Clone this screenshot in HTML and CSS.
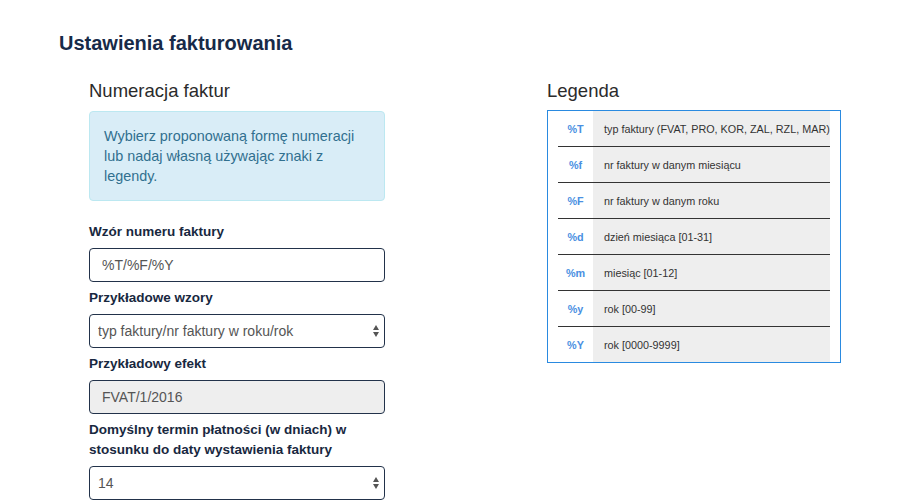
FILE: index.html
```html
<!DOCTYPE html>
<html lang="pl">

<head>
    <meta charset="UTF-8">
    <meta name="viewport" content="width=device-width, initial-scale=1.0">
    <title>Ustawienia fakturowania</title>
    <link rel="stylesheet" href="styles.css">
</head>

<body>
    <div class="page">
        <h1 class="page-title">Ustawienia fakturowania</h1>

        <div class="columns">
            <div class="col-form">
                <h2 class="section-title">Numeracja faktur</h2>

                <div class="alert-info">
                    Wybierz proponowaną formę numeracji lub nadaj własną używając znaki z legendy.
                </div>

                <form class="settings-form">
                    <label for="pattern">Wzór numeru faktury</label>
                    <input type="text" id="pattern" class="field" value="%T/%F/%Y">

                    <label for="examples">Przykładowe wzory</label>
                    <div class="select-wrap">
                        <select id="examples" class="field select">
                            <option>typ faktury/nr faktury w roku/rok</option>
                            <option>typ faktury/nr faktury w miesiącu/miesiąc/rok</option>
                        </select>
                    </div>

                    <label for="effect">Przykładowy efekt</label>
                    <input type="text" id="effect" class="field" value="FVAT/1/2016" disabled>

                    <label for="term">Domyślny termin płatności (w dniach) w stosunku do daty wystawienia faktury</label>
                    <div class="select-wrap">
                        <select id="term" class="field select">
                            <option>14</option>
                            <option>7</option>
                            <option>30</option>
                        </select>
                    </div>
                </form>
            </div>

            <div class="col-legend">
                <h2 class="section-title legend-title">Legenda</h2>
                <div class="legend-box">
                    <table class="legend">
                        <colgroup>
                            <col class="col-code">
                            <col>
                        </colgroup>
                        <tr><td class="code">%T</td><td class="desc">typ faktury (FVAT, PRO, KOR, ZAL, RZL, MAR)</td></tr>
                        <tr><td class="code">%f</td><td class="desc">nr faktury w danym miesiącu</td></tr>
                        <tr><td class="code">%F</td><td class="desc">nr faktury w danym roku</td></tr>
                        <tr><td class="code">%d</td><td class="desc">dzień miesiąca [01-31]</td></tr>
                        <tr><td class="code">%m</td><td class="desc">miesiąc [01-12]</td></tr>
                        <tr><td class="code">%y</td><td class="desc">rok [00-99]</td></tr>
                        <tr><td class="code">%Y</td><td class="desc">rok [0000-9999]</td></tr>
                    </table>
                </div>
            </div>
        </div>
    </div>
</body>

</html>
```

FILE: styles.css
```css
body {
    margin: 0;
    font-family: "Liberation Sans", Arial, sans-serif;
    background-color: #fff;
    color: #333;
}

.page {
    padding: 32px 0 0 59px;
}

.page-title {
    margin: 0;
    font-size: 20px;
    line-height: 22px;
    font-weight: bold;
    color: #172a48;
}

.columns {
    display: flex;
    gap: 162px;
    padding-left: 30px;
    margin-top: 27px;
}

.col-form {
    width: 296px;
}

.col-legend {
    width: 294px;
}

.section-title {
    margin: 0 0 10px;
    font-size: 18.5px;
    line-height: 20px;
    font-weight: normal;
    color: #2b2b2b;
}

.legend-title {
    margin-bottom: 9px;
}

.alert-info {
    background-color: #d9edf7;
    border: 1px solid #bce8f1;
    border-radius: 4px;
    padding: 14px;
    color: #31708f;
    font-size: 14.4px;
    line-height: 20px;
    margin-bottom: 21px;
}

.settings-form label {
    display: block;
    font-size: 13.5px;
    line-height: 20px;
    font-weight: bold;
    color: #182840;
    margin-bottom: 6px;
}

.field {
    display: block;
    box-sizing: border-box;
    width: 100%;
    height: 34px;
    margin: 0 0 6px;
    padding: 0 12px;
    border: 1px solid #22324a;
    border-radius: 4px;
    background-color: #fff;
    font-family: "Liberation Sans", Arial, sans-serif;
    font-size: 14px;
    color: #555;
}

.field:disabled {
    background-color: #eee;
    color: #555;
}

.select-wrap {
    position: relative;
}

.select {
    appearance: none;
    -webkit-appearance: none;
    padding-left: 8px;
}

.select-wrap::before,
.select-wrap::after {
    content: "";
    position: absolute;
    right: 6px;
    width: 0;
    height: 0;
    border-left: 3px solid transparent;
    border-right: 3px solid transparent;
    pointer-events: none;
}

.select-wrap::before {
    top: 11px;
    border-bottom: 5px solid #555;
}

.select-wrap::after {
    top: 18px;
    border-top: 5px solid #555;
}

.legend-box {
    border: 1px solid #2a8ae0;
    padding: 0 10px;
}

.legend {
    width: 272px;
    table-layout: fixed;
    border-collapse: separate;
    border-spacing: 0;
    font-size: 10.8px;
}

.legend .col-code {
    width: 35px;
}

.legend td {
    height: 35px;
    padding: 0;
    border-bottom: 1px solid #333;
    vertical-align: middle;
}

.legend tr:last-child td {
    border-bottom: none;
}

.legend .code {
    text-align: center;
    font-weight: bold;
    color: #4a90e2;
}

.legend .desc {
    padding-left: 11px;
    background-color: #eee;
    color: #333;
    white-space: nowrap;
    overflow: hidden;
}
```
